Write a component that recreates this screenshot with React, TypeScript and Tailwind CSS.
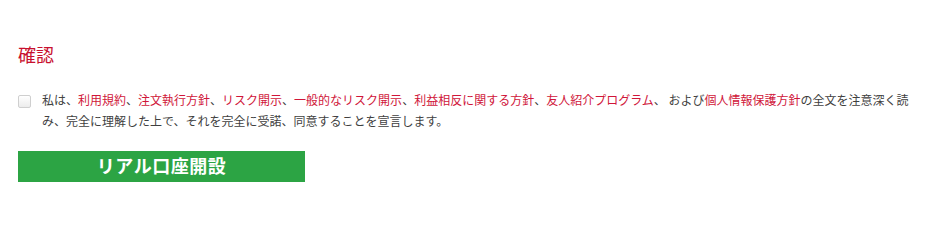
const links = {
  a: '利用規約',
  b: '注文執行方針',
  c: 'リスク開示',
  d: '一般的なリスク開示',
  e: '利益相反に関する方針',
  f: '友人紹介プログラム',
  g: '個人情報保護方針',
};

function L({ children }: { children: React.ReactNode }) {
  return <span className="text-[#d0163a]">{children}</span>;
}

export default function App() {
  return (
    <div
      className="w-[930px] h-[240px] bg-white px-[18px] pt-[42px]"
      style={{ fontFamily: '"Noto Sans CJK JP", "Noto Sans", sans-serif' }}
    >
      {/* Title */}
      <h2 className="text-[18px] leading-[24px] text-[#c8102e] font-normal">確認</h2>

      {/* Agreement */}
      <div className="mt-[26px] flex items-start">
        <span className="mt-[3px] w-[13px] h-[13px] shrink-0 border border-[#cfcfcf] rounded-[2px] bg-gradient-to-b from-white to-[#ececec]" />
        <p className="ml-[11px] w-[880px] text-[12px] leading-[21px] text-[#3f3f3f] -mt-[3px]">
          私は、<L>{links.a}</L>、<L>{links.b}</L>、<L>{links.c}</L>、<L>{links.d}</L>、<L>{links.e}</L>、<L>{links.f}</L>、
          および<L>{links.g}</L>の全文を注意深く読み、完全に理解した上で、それを完全に受諾、同意することを宣言します。
        </p>
      </div>

      {/* Button */}
      <button className="mt-[20px] block w-[287px] h-[31px] bg-[#2ca444] text-white text-[18px] font-bold leading-[24px] tracking-[0.5px] pb-[4px]">
        リアル口座開設
      </button>
    </div>
  );
}
